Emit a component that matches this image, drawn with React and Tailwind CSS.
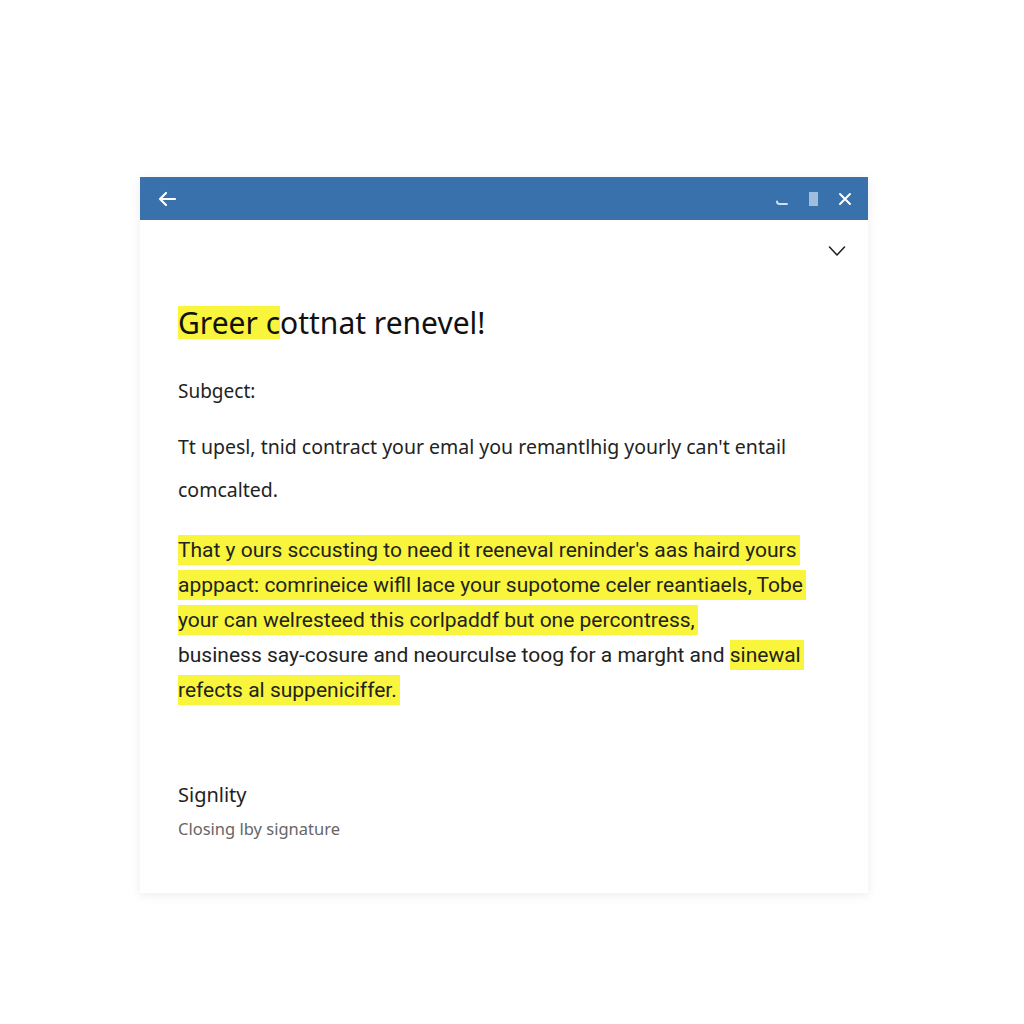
import React from "react";

function Hl({ children }) {
  return <span className="bg-[#f9f53c] box-decoration-clone py-[3px] pr-[3px]">{children}</span>;
}

export default function App() {
  return (
    <div className="min-h-[1024px] w-[1024px] bg-white pt-[177px] pl-[140px]" style={{ fontFamily: '"Noto Sans", "Open Sans", sans-serif' }}>
      <div className="w-[728px] h-[716px] bg-white shadow-[0_2px_10px_rgba(0,0,0,0.08)] flex flex-col">
        <div className="h-[43px] bg-[#3871ab] flex items-center pl-[17px] pr-[16px]">
          <svg width="20" height="16" viewBox="0 0 20 16" fill="none" stroke="white" strokeWidth="2.2" strokeLinecap="round" strokeLinejoin="round">
            <path d="M18 8H3M9 2L3 8l6 6" />
          </svg>
          <div className="flex-1" />
          <div className="flex items-center gap-[20px]">
            <svg width="14" height="14" viewBox="0 0 14 14" fill="none" stroke="#cfe0f2" strokeWidth="2" strokeLinecap="round">
              <path d="M2 9.5c0 2 1 2.5 3 2.5h7" />
            </svg>
            <div className="w-[9px] h-[14px] bg-[#9fbede]" />
            <svg width="14" height="14" viewBox="0 0 14 14" fill="none" stroke="white" strokeWidth="2" strokeLinecap="round">
              <path d="M2 2l10 10M12 2L2 12" />
            </svg>
          </div>
        </div>
        <div className="flex-1 relative px-[38px]">
          <svg className="absolute right-[22px] top-[25px]" width="18" height="12" viewBox="0 0 18 12" fill="none" stroke="#222" strokeWidth="1.6" strokeLinecap="round" strokeLinejoin="round">
            <path d="M1.5 2l7.5 8 7.5-8" />
          </svg>
          <h1 className="mt-[85px] text-[30px] leading-[36px] text-[#111]">
            <span className="inline-block leading-[33px] bg-[#f9f53c]">Greer c</span>ottnat renevel!
          </h1>
          <p className="mt-[38px] text-[19px] leading-[24px] text-[#222]">Subgect:</p>
          <p className="mt-[22px] text-[19.5px] leading-[43px] text-[#222] w-[650px]">
            Tt upesl, tnid contract your emal you remantlhig yourly can't entail comcalted.
          </p>
          <div className="mt-[22px] text-[21px] leading-[35px] text-[#222] flex flex-col items-start" style={{ fontFamily: '"Roboto", sans-serif' }}>
            <div><Hl>That y ours sccusting to need it reeneval reninder's aas haird yours</Hl></div>
            <div><Hl>apppact: comrineice wifll lace your supotome celer reantiaels, Tobe</Hl></div>
            <div><Hl>your can welresteed this corlpaddf but one percontress,</Hl></div>
            <div>business say-cosure and neourculse toog for a marght and <Hl>sinewal</Hl></div>
            <div><Hl>refects al suppeniciffer.</Hl></div>
          </div>
          <p className="mt-[74px] text-[20px] leading-[26px] text-[#222]">Signlity</p>
          <p className="mt-[10px] text-[16.5px] leading-[22px] text-[#666]">Closing lby signature</p>
        </div>
      </div>
    </div>
  );
}
